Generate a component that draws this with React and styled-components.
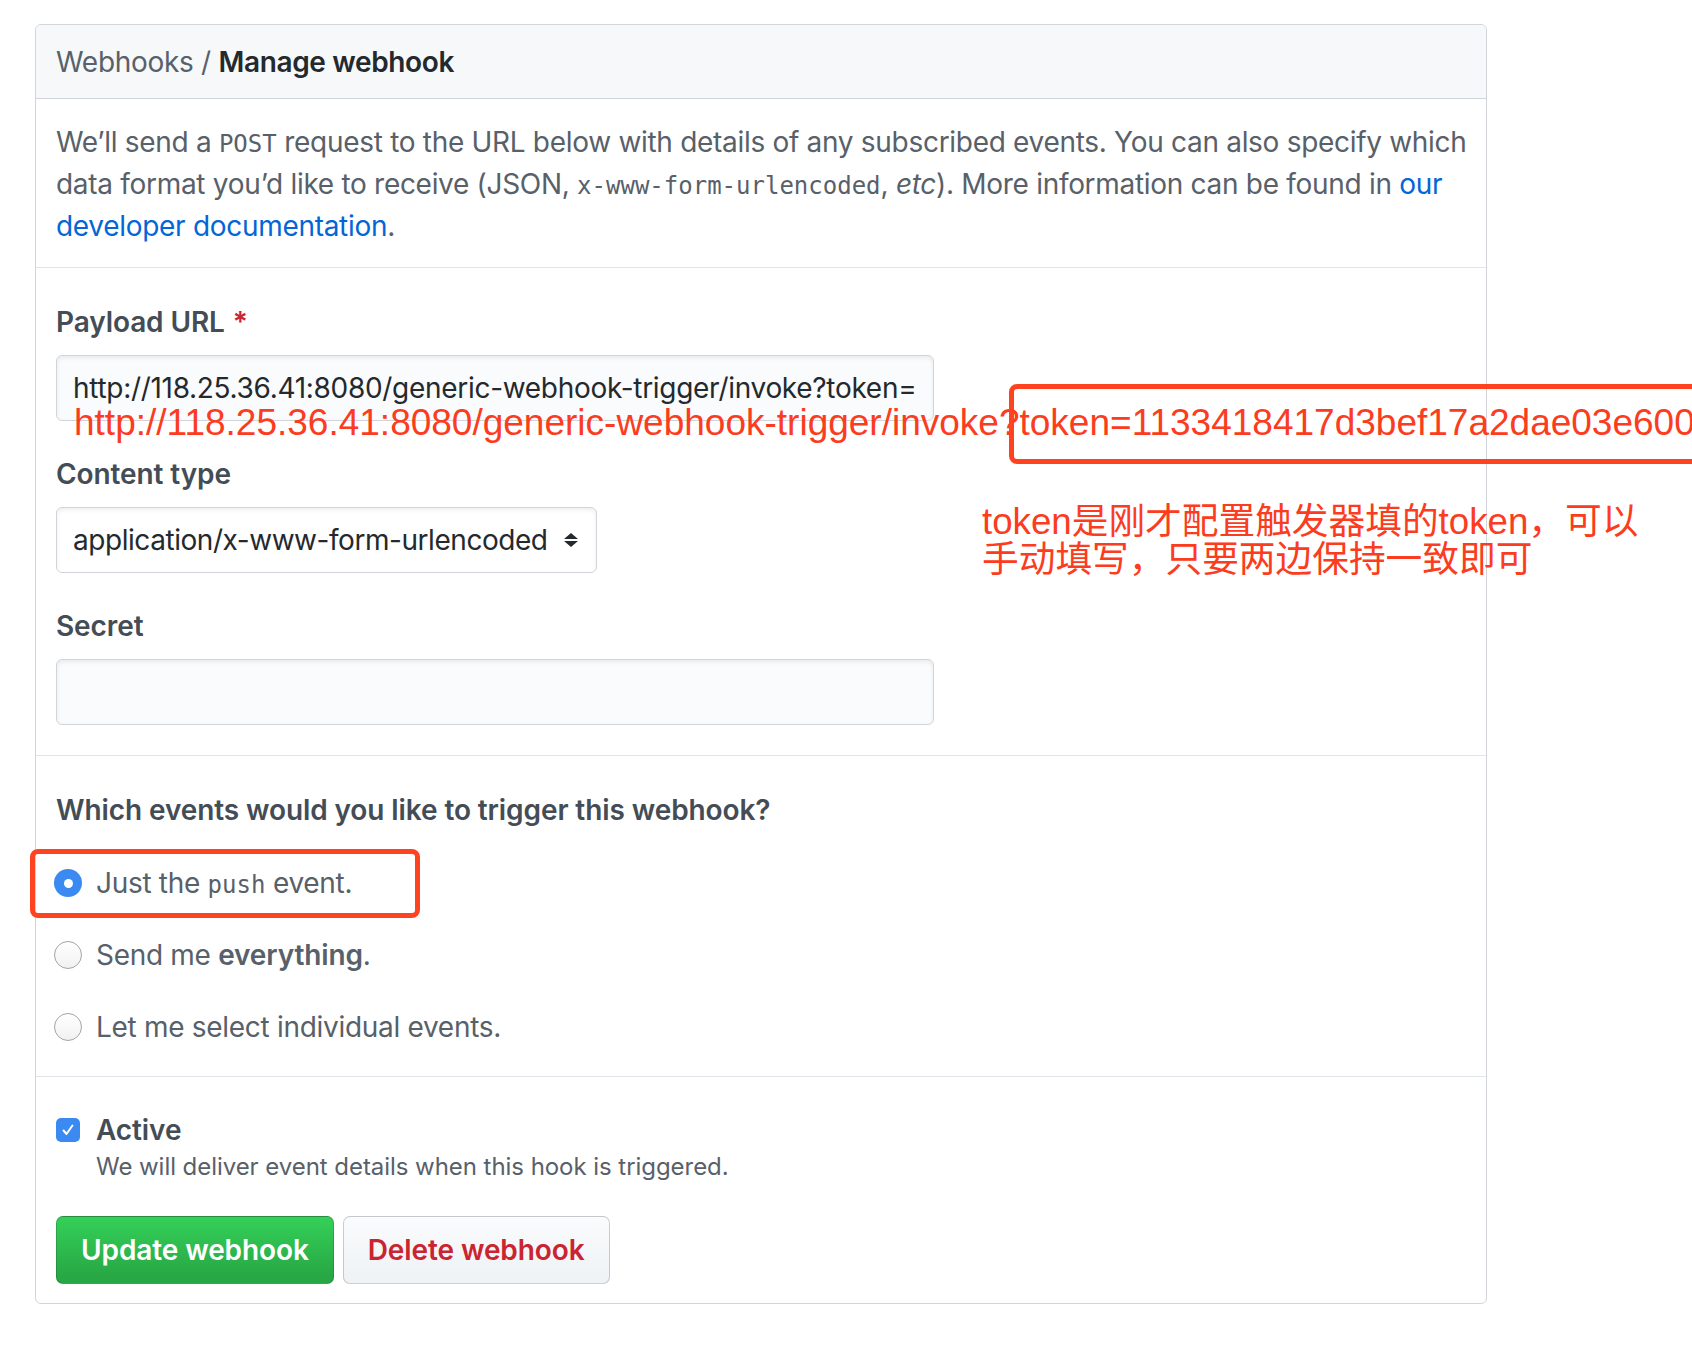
import React from 'react'
import styled, { createGlobalStyle } from 'styled-components'

const GlobalStyle = createGlobalStyle`
  html, body {
    margin: 0;
    padding: 0;
    background: #fff;
    overflow: hidden;
  }
  body {
    font-family: Inter, "Noto Sans", sans-serif;
  }
`

const Page = styled.div`
  position: relative;
  width: 1692px;
  height: 1352px;
  padding: 24px 0 0 35px;
  box-sizing: border-box;
  overflow: hidden;
`

const Box = styled.div`
  width: 1452px;
  border: 1px solid #d1d5da;
  border-radius: 6px;
  box-sizing: border-box;
  font-size: 28px;
  letter-spacing: -0.3px;
  color: #586069;
`

const BoxHeader = styled.div`
  height: 74px;
  box-sizing: border-box;
  display: flex;
  align-items: center;
  padding: 0 20px;
  background: #f6f8fa;
  border-bottom: 1px solid #d1d5da;
  border-radius: 6px 6px 0 0;
`

const Crumb = styled.span`
  color: #586069;
  white-space: pre;
`

const CrumbCurrent = styled.strong`
  color: #24292e;
  font-weight: 600;
  letter-spacing: -0.35px;
`

const Section = styled.div`
  padding: ${p => p.$pad};
  border-bottom: ${p => (p.$last ? 'none' : '1px solid #e1e4e8')};
`

const Intro = styled.p`
  margin: 0;
  line-height: 42px;
  color: #586069;
  white-space: nowrap;
`

const Code = styled.code`
  font-family: "DejaVu Sans Mono", "Liberation Mono", monospace;
  font-size: 24px;
  line-height: 1;
  letter-spacing: 0;
`

const Link = styled.a`
  color: #0366d6;
  text-decoration: none;
`

const Group = styled.div`
  display: flex;
  flex-direction: column;
  gap: 12px;
  & + & {
    margin-top: 32px;
  }
`

const Label = styled.label`
  line-height: 42px;
  font-weight: 600;
  letter-spacing: -0.1px;
  color: #444d56;
`

const Required = styled.span`
  color: #cb2431;
  margin-left: 8px;
`

const TextInput = styled.div`
  width: 878px;
  height: 66px;
  box-sizing: border-box;
  display: flex;
  align-items: center;
  padding: 0 16px;
  background: #fafbfc;
  border: 1px solid #d1d5da;
  border-radius: 6px;
  box-shadow: inset 0 2px 4px rgba(27, 31, 35, 0.075);
  color: #24292e;
  white-space: nowrap;
  overflow: hidden;
`

const Select = styled.div`
  width: 541px;
  height: 66px;
  box-sizing: border-box;
  display: flex;
  align-items: center;
  justify-content: space-between;
  padding: 0 17px 0 16px;
  background: #fff;
  border: 1px solid #d1d5da;
  border-radius: 6px;
  box-shadow: inset 0 2px 4px rgba(27, 31, 35, 0.075);
  color: #24292e;
  letter-spacing: -0.45px;
`

const Title = styled.div`
  line-height: 42px;
  font-weight: 600;
  letter-spacing: -0.1px;
  color: #444d56;
`

const OptionList = styled.div`
  margin-top: 31px;
  display: flex;
  flex-direction: column;
  gap: 30px;
`

const Option = styled.div`
  display: flex;
  align-items: center;
  gap: 14px;
  height: 42px;
  line-height: 42px;
  color: #586069;
`

const Radio = styled.span`
  width: 28px;
  height: 28px;
  margin-left: -2px;
  box-sizing: border-box;
  border-radius: 50%;
  display: flex;
  align-items: center;
  justify-content: center;
  flex-shrink: 0;
  background: ${p => (p.$checked ? '#3b8af2' : 'linear-gradient(#ffffff, #f1f1f1)')};
  border: ${p => (p.$checked ? 'none' : '1.5px solid #a4a4a4')};
  &::after {
    content: '';
    display: ${p => (p.$checked ? 'block' : 'none')};
    width: 9px;
    height: 9px;
    border-radius: 50%;
    background: #fff;
  }
`

const Strong = styled.strong`
  font-weight: 600;
  letter-spacing: -0.15px;
`

const CheckRow = styled.div`
  display: flex;
  align-items: center;
  gap: 16px;
  line-height: 42px;
`

const CheckBox = styled.span`
  width: 24px;
  height: 24px;
  border-radius: 5px;
  background: #3b8af2;
  display: flex;
  align-items: center;
  justify-content: center;
  flex-shrink: 0;
`

const CheckLabel = styled.span`
  font-weight: 600;
  letter-spacing: -0.1px;
  color: #444d56;
`

const Note = styled.p`
  margin: 0 0 0 40px;
  font-size: 24px;
  line-height: 32px;
  letter-spacing: -0.05px;
  color: #586069;
`

const Actions = styled.div`
  margin-top: 33px;
  display: flex;
  gap: 9px;
`

const Button = styled.button`
  height: 68px;
  box-sizing: border-box;
  padding: 0 ${p => p.$padX}px;
  font-family: inherit;
  font-size: 28px;
  font-weight: 600;
  letter-spacing: -0.1px;
  border-radius: 7px;
  border: 1px solid rgba(27, 31, 35, 0.2);
  color: ${p => (p.$primary ? '#fff' : '#cb2431')};
  background: ${p =>
    p.$primary
      ? 'linear-gradient(-180deg, #34d058 0%, #28a745 90%)'
      : 'linear-gradient(-180deg, #fafbfc 0%, #eff3f6 90%)'};
`

/* annotations drawn over the screenshot */
const annotRed = '#fb3c20'

const RedUrl = styled.div`
  position: absolute;
  left: 74px;
  top: 403px;
  font-family: "Liberation Sans", Arial, sans-serif;
  font-size: 37px;
  line-height: 40px;
  color: ${annotRed};
  white-space: nowrap;
`

const Frame = styled.div`
  position: absolute;
  left: ${p => p.$x}px;
  top: ${p => p.$y}px;
  width: ${p => p.$w}px;
  height: ${p => p.$h}px;
  box-sizing: border-box;
  border: 5px solid #ff4220;
  border-radius: 8px;
`

const Remark = styled.div`
  position: absolute;
  left: 982px;
  top: 503px;
  font-family: "Liberation Sans", "Noto Sans CJK SC", sans-serif;
  font-size: 36.7px;
  line-height: 38px;
  color: ${annotRed};
  white-space: nowrap;
`

const Arrows = () => (
  <svg width="16" height="16" viewBox="0 0 16 16">
    <path d="M8 1 L15 7 H1 Z" fill="#24292e" />
    <path d="M8 15 L15 9 H1 Z" fill="#24292e" />
  </svg>
)

const Check = () => (
  <svg width="16" height="16" viewBox="0 0 16 16">
    <path d="M3.5 8.5 L6.5 12 L12.5 3.5" fill="none" stroke="#fff" strokeWidth="2" strokeLinecap="round" strokeLinejoin="round" />
  </svg>
)

const events = [
  { key: 'push', checked: true, label: <>Just the <Code>push</Code> event.</> },
  { key: 'all', checked: false, label: <>Send me <Strong>everything</Strong>.</> },
  { key: 'some', checked: false, label: <>Let me select individual events.</> },
]

export default function App() {
  return (
    <Page>
      <GlobalStyle />
      <Box>
        <BoxHeader>
          <Crumb>Webhooks / </Crumb>
          <CrumbCurrent>Manage webhook</CrumbCurrent>
        </BoxHeader>

        <Section $pad="22px 20px 20px">
          <Intro>
            We’ll send a <Code>POST</Code> request to the URL below with details of any subscribed events. You can also specify which
            <br />
            data format you’d like to receive (JSON, <Code>x-www-form-urlencoded</Code>, <em>etc</em>). More information can be found in <Link>our</Link>
            <br />
            <Link>developer documentation</Link>.
          </Intro>
        </Section>

        <Section $pad="33px 20px 30px">
          <Group>
            <Label>Payload URL<Required>*</Required></Label>
            <TextInput>http://118.25.36.41:8080/generic-webhook-trigger/invoke?token=</TextInput>
          </Group>
          <Group>
            <Label>Content type</Label>
            <Select>
              application/x-www-form-urlencoded
              <Arrows />
            </Select>
          </Group>
          <Group>
            <Label>Secret</Label>
            <TextInput />
          </Group>
        </Section>

        <Section $pad="33px 20px 28px">
          <Title>Which events would you like to trigger this webhook?</Title>
          <OptionList>
            {events.map(ev => (
              <Option key={ev.key}>
                <Radio $checked={ev.checked} />
                <span>{ev.label}</span>
              </Option>
            ))}
          </OptionList>
        </Section>

        <Section $pad="32px 20px 19px" $last>
          <CheckRow>
            <CheckBox><Check /></CheckBox>
            <CheckLabel>Active</CheckLabel>
          </CheckRow>
          <Note>We will deliver event details when this hook is triggered.</Note>
          <Actions>
            <Button $primary $padX={24}>Update webhook</Button>
            <Button $padX={24}>Delete webhook</Button>
          </Actions>
        </Section>
      </Box>

      <RedUrl>http://118.25.36.41:8080/generic-webhook-trigger/invoke?token=1133418417d3bef17a2dae03e600c</RedUrl>
      <Frame $x={1009} $y={384} $w={800} $h={80} />
      <Frame $x={30} $y={849} $w={390} $h={69} />
      <Remark>
        token是刚才配置触发器填的token，可以
        <br />
        手动填写，只要两边保持一致即可
      </Remark>
    </Page>
  )
}
